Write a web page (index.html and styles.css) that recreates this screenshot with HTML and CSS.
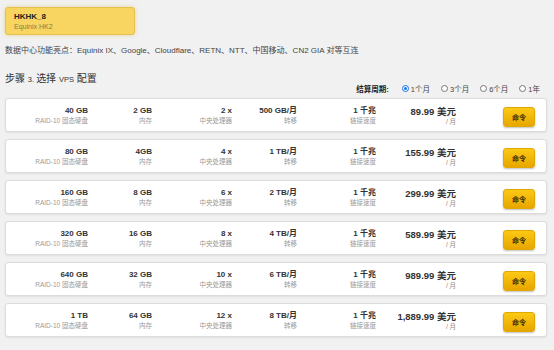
FILE: index.html
```html
<!DOCTYPE html>
<html lang="zh">
<head>
<meta charset="utf-8">
<link rel="stylesheet" href="styles.css">
</head>
<body>
<div class="page">
  <div class="dc-card">
    <div class="dc-name">HKHK_8</div>
    <div class="dc-sub">Equinix HK2</div>
  </div>
  <p class="highlights">数据中心功能亮点：Equinix IX、Google、Cloudflare、RETN、NTT、中国移动、CN2 GIA 对等互连</p>
  <div class="step-head">
    <h2 class="step-title">步骤 <span class="small">3. </span>选择 <span class="small">VPS</span> 配置</h2>
    <div class="cycle">
      <span class="cycle-label">结算周期:</span>
      <label class="radio"><span class="dot on"></span>1个月</label>
      <label class="radio"><span class="dot"></span>3个月</label>
      <label class="radio"><span class="dot"></span>6个月</label>
      <label class="radio"><span class="dot"></span>1年</label>
    </div>
  </div>
  <div class="plans">
    <div class="plan">
      <div class="cell"><b>40 GB</b><span>RAID-10 固态硬盘</span></div>
      <div class="cell"><b>2 GB</b><span>内存</span></div>
      <div class="cell"><b>2 x</b><span>中央处理器</span></div>
      <div class="cell"><b>500 GB/月</b><span>转移</span></div>
      <div class="cell"><b>1 千兆</b><span>链接速度</span></div>
      <div class="cell price"><b>89.99 美元</b><span>/ 月</span></div>
      <div class="btn-cell"><button class="order">命令</button></div>
    </div>
    <div class="plan">
      <div class="cell"><b>80 GB</b><span>RAID-10 固态硬盘</span></div>
      <div class="cell"><b>4GB</b><span>内存</span></div>
      <div class="cell"><b>4 x</b><span>中央处理器</span></div>
      <div class="cell"><b>1 TB/月</b><span>转移</span></div>
      <div class="cell"><b>1 千兆</b><span>链接速度</span></div>
      <div class="cell price"><b>155.99 美元</b><span>/ 月</span></div>
      <div class="btn-cell"><button class="order">命令</button></div>
    </div>
    <div class="plan">
      <div class="cell"><b>160 GB</b><span>RAID-10 固态硬盘</span></div>
      <div class="cell"><b>8 GB</b><span>内存</span></div>
      <div class="cell"><b>6 x</b><span>中央处理器</span></div>
      <div class="cell"><b>2 TB/月</b><span>转移</span></div>
      <div class="cell"><b>1 千兆</b><span>链接速度</span></div>
      <div class="cell price"><b>299.99 美元</b><span>/ 月</span></div>
      <div class="btn-cell"><button class="order">命令</button></div>
    </div>
    <div class="plan">
      <div class="cell"><b>320 GB</b><span>RAID-10 固态硬盘</span></div>
      <div class="cell"><b>16 GB</b><span>内存</span></div>
      <div class="cell"><b>8 x</b><span>中央处理器</span></div>
      <div class="cell"><b>4 TB/月</b><span>转移</span></div>
      <div class="cell"><b>1 千兆</b><span>链接速度</span></div>
      <div class="cell price"><b>589.99 美元</b><span>/ 月</span></div>
      <div class="btn-cell"><button class="order">命令</button></div>
    </div>
    <div class="plan">
      <div class="cell"><b>640 GB</b><span>RAID-10 固态硬盘</span></div>
      <div class="cell"><b>32 GB</b><span>内存</span></div>
      <div class="cell"><b>10 x</b><span>中央处理器</span></div>
      <div class="cell"><b>6 TB/月</b><span>转移</span></div>
      <div class="cell"><b>1 千兆</b><span>链接速度</span></div>
      <div class="cell price"><b>989.99 美元</b><span>/ 月</span></div>
      <div class="btn-cell"><button class="order">命令</button></div>
    </div>
    <div class="plan">
      <div class="cell"><b>1 TB</b><span>RAID-10 固态硬盘</span></div>
      <div class="cell"><b>64 GB</b><span>内存</span></div>
      <div class="cell"><b>12 x</b><span>中央处理器</span></div>
      <div class="cell"><b>8 TB/月</b><span>转移</span></div>
      <div class="cell"><b>1 千兆</b><span>链接速度</span></div>
      <div class="cell price"><b>1,889.99 美元</b><span>/ 月</span></div>
      <div class="btn-cell"><button class="order">命令</button></div>
    </div>
  </div>
</div>
</body>
</html>
```

FILE: styles.css
```css
* { box-sizing: border-box; }
html, body { margin: 0; padding: 0; }
body {
  background: #f1f1f1;
  font-family: "Liberation Sans", "Noto Sans CJK SC", Arial, sans-serif;
  color: #333;
  width: 554px;
  height: 350px;
  overflow: hidden;
}
.page { padding: 7px 7px 0 5px; }
.dc-card {
  width: 130px;
  height: 28px;
  background: #f8d560;
  border: 1px solid #e5c04f;
  border-radius: 3px;
  box-shadow: 0 0 4px rgba(220, 180, 40, 0.45);
  padding: 4px 0 0 8px;
}
.dc-name { font-size: 8px; font-weight: bold; color: #222; line-height: 10px; }
.dc-sub { font-size: 7px; color: #8a7a48; line-height: 9px; }
.highlights {
  margin: 10px 0 0 0;
  font-size: 8px;
  line-height: 12px;
  color: #444;
}
.step-head {
  display: flex;
  justify-content: space-between;
  align-items: flex-end;
  margin-top: 16px;
  height: 20px;
}
.step-title {
  margin: 0;
  font-size: 10px;
  font-weight: normal;
  color: #333;
  align-self: flex-start;
  line-height: 12px;
}
.step-title .small { font-size: 7.5px; }
.cycle {
  display: flex;
  align-items: center;
  font-size: 7.5px;
  color: #444;
  padding-right: 7px;
  margin-bottom: -1px;
}
.cycle-label { font-weight: bold; color: #222; margin-right: 13px; }
.radio { display: flex; align-items: center; margin-right: 11px; }
.radio:last-child { margin-right: 0; }
.dot {
  width: 7px; height: 7px;
  border-radius: 50%;
  border: 1px solid #777;
  background: #fff;
  margin-right: 2px;
  position: relative;
}
.dot.on { border-color: #1a73e8; }
.dot.on::after {
  content: "";
  position: absolute;
  left: 1px; top: 1px;
  width: 3px; height: 3px;
  border-radius: 50%;
  background: #1a73e8;
}
.plans {
  display: flex;
  flex-direction: column;
  gap: 7px;
  margin-top: 5px;
}
.plan {
  height: 34px;
  background: #fff;
  border: 1px solid #dcdcdc;
  border-radius: 3px;
  box-shadow: 0 1px 2px rgba(0,0,0,0.08);
  display: grid;
  grid-template-columns: 82px 64px 80px 65px 79px 80px 1fr;
  align-items: center;
}
.cell {
  display: flex;
  flex-direction: column;
  align-items: flex-end;
  text-align: right;
  padding-top: 1px;
}
.cell b { font-size: 8px; font-weight: bold; color: #333; line-height: 10px; }
.cell span { font-size: 6.5px; color: #999; line-height: 9px; }
.price b { font-size: 9.5px; color: #333; line-height: 11px; }
.price span { color: #888; }
.btn-cell { display: flex; justify-content: flex-end; padding-right: 11px; padding-top: 3px; }
.order {
  width: 32px;
  height: 20px;
  border: 1px solid #e0a800;
  border-radius: 3px;
  background: linear-gradient(#fbc914, #e8a600);
  box-shadow: 0 1px 2px rgba(0,0,0,0.25);
  font-family: "Noto Sans CJK SC", sans-serif;
  font-size: 7px;
  font-weight: bold;
  color: #3a2a00;
  padding: 0;
}
```
